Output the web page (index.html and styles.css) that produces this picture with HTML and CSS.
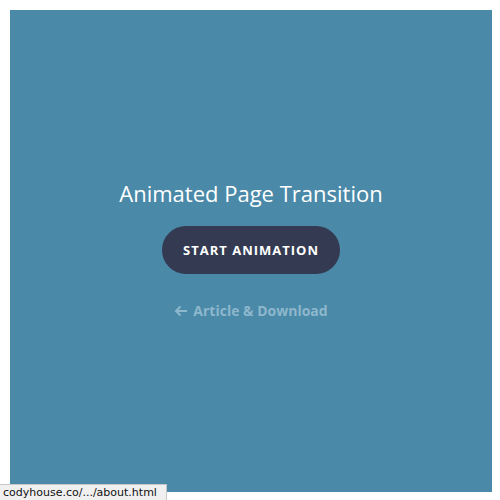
FILE: index.html
```html
<!DOCTYPE html>
<html>
<head>
<meta charset="utf-8">
<link rel="stylesheet" href="styles.css">
</head>
<body>
<main class="stage">
  <h1 class="title">Animated Page Transition</h1>
  <a class="btn" href="#">Start Animation</a>
  <a class="back" href="#"><svg class="arrow" width="14" height="12" viewBox="0 0 14 12"><path d="M13 6H2M6.5 1.5L2 6l4.5 4.5" fill="none" stroke="currentColor" stroke-width="2"/></svg>Article &amp; Download</a>
</main>
<div class="status">codyhouse.co/.../about.html</div>
</body>
</html>
```
FILE: styles.css
```css
html, body {
  margin: 0;
  padding: 0;
  background: #fff;
}
body {
  width: 500px;
  height: 500px;
  position: relative;
  font-family: "Open Sans", sans-serif;
}
.stage {
  box-sizing: border-box;
  margin: 10px 8px 8px 10px;
  width: 482px;
  height: 482px;
  padding-bottom: 4px;
  background: #4a89a8;
  display: flex;
  flex-direction: column;
  align-items: center;
  justify-content: center;
}
.title {
  margin: 0;
  color: #fff;
  font-weight: 400;
  font-size: 22px;
  line-height: 30px;
}
.btn {
  margin-top: 18px;
  width: 178px;
  height: 48px;
  border-radius: 24px;
  background: #333a51;
  color: #fff;
  text-decoration: none;
  text-transform: uppercase;
  font-weight: 700;
  font-size: 13px;
  letter-spacing: 1px;
  display: flex;
  align-items: center;
  justify-content: center;
}
.back {
  margin-top: 27px;
  color: #8db7cc;
  text-decoration: none;
  font-weight: 700;
  font-size: 14px;
  display: flex;
  align-items: center;
  gap: 5px;
}
.arrow {
  display: block;
}
.status {
  position: absolute;
  left: 0;
  bottom: 0;
  height: 15px;
  padding: 0 4px 0 3px;
  background: #f0f0f0;
  border: 1px solid #c8c8c8;
  border-left: none;
  border-bottom: none;
  font-family: "DejaVu Sans", sans-serif;
  font-size: 11px;
  line-height: 15px;
  color: #111;
  width: 159px;
  white-space: nowrap;
  overflow: hidden;
}
```
